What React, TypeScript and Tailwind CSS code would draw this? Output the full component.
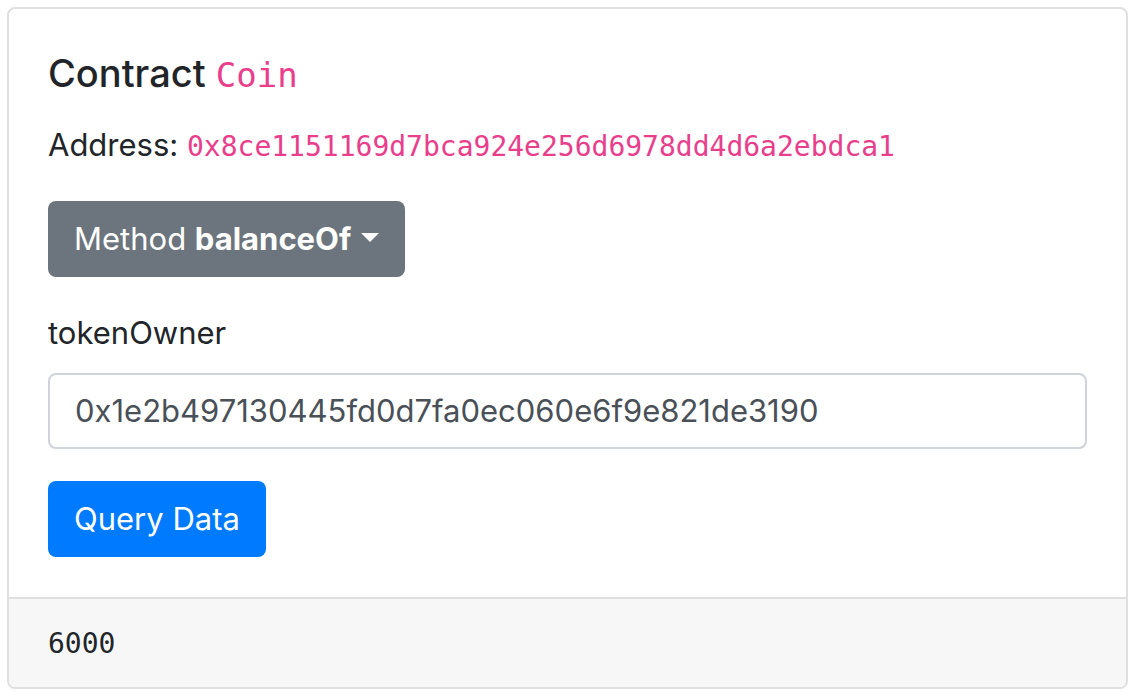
import React from "react";

export default function App() {
  const sans = "font-['Inter','Helvetica_Neue','Liberation_Sans',sans-serif]";
  const mono = "font-['DejaVu_Sans_Mono','Liberation_Mono',monospace]";
  return (
    <div className={`w-[1136px] h-[698px] bg-white pt-[7px] pl-[7px] pr-[8px] ${sans} text-[#212529]`}>
      <div className="w-[1121px] h-[682px] border-2 border-[#dfdfdf] rounded-[8px] flex flex-col overflow-hidden">
        <div className="px-[39px] pt-[40px] pb-[40px] flex flex-col items-start">
          <h5 className="text-[38px] leading-[48px] h-[48px] font-medium mb-[24px]">
            Contract <code className={`${mono} text-[34px] leading-none font-normal text-[#e83e8c]`}>Coin</code>
          </h5>
          <p className="text-[31px] leading-[48px] h-[48px] mb-[32px]">
            Address: <code className={`${mono} text-[28px] leading-none text-[#e83e8c]`}>0x8ce1151169d7bca924e256d6978dd4d6a2ebdca1</code>
          </p>
          <button className="h-[76px] px-[26px] rounded-[8px] bg-[#6c757d] text-white text-[31px] leading-[48px] flex items-center mb-[32px]">
            <span>Method&nbsp;</span>
            <span className="font-bold">balanceOf</span>
            <span className="ml-[10px] w-0 h-0 border-l-[9px] border-r-[9px] border-t-[9px] border-l-transparent border-r-transparent border-t-white mb-[4px]"></span>
          </button>
          <label className="text-[31px] leading-[48px] mb-[16px]">tokenOwner</label>
          <div className="w-full h-[76px] border-2 border-[#ced4da] rounded-[8px] px-[25px] flex items-center text-[31px] text-[#495057] mb-[32px]">
            0x1e2b497130445fd0d7fa0ec060e6f9e821de3190
          </div>
          <button className="h-[76px] px-[26px] rounded-[8px] bg-[#007bff] text-white text-[31px] leading-[48px] flex items-center">
            Query Data
          </button>
        </div>
        <div className="flex-1 border-t-2 border-[#dfdfdf] bg-[#f7f7f7] px-[39px] pt-[24px]">
          <pre className={`${mono} text-[28px] leading-[42px] text-[#212529]`}>6000</pre>
        </div>
      </div>
    </div>
  );
}
